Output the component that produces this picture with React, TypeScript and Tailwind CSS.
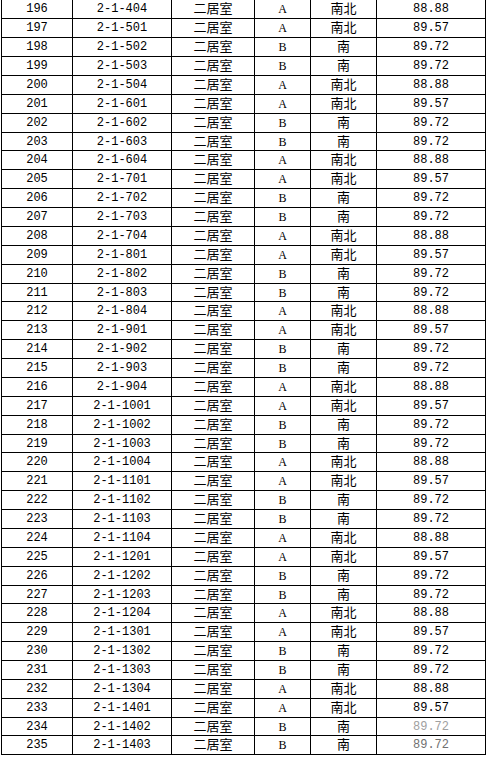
import React from "react";

type Row = { no: number; room: string; kind: string; dir: string; area: string };

const floors = [5, 6, 7, 8, 9, 10, 11, 12, 13, 14];

function buildRows(): Row[] {
  const rooms: string[] = ["2-1-404"];
  for (const f of floors) {
    for (let u = 1; u <= 4; u++) {
      rooms.push(`2-1-${f}0${u}`);
    }
  }
  const list = rooms.slice(0, 40);
  return list.map((room, i) => {
    const unit = room.slice(-1);
    let kind = "B";
    let dir = "南";
    let area = "89.72";
    if (unit === "4") {
      kind = "A";
      dir = "南北";
      area = "88.88";
    } else if (unit === "1") {
      kind = "A";
      dir = "南北";
      area = "89.57";
    }
    return { no: 196 + i, room, kind, dir, area };
  });
}

const rows = buildRows();
const shortRows = new Set([7, 15, 23, 31, 38]);

const mono = { fontFamily: '"Liberation Mono", "DejaVu Sans Mono", monospace' };
const serif = { fontFamily: '"Liberation Serif", "DejaVu Serif", serif' };

export default function App() {
  return (
    <div className="w-[490px] h-[758px] bg-white overflow-hidden">
      <div className="ml-[1px] w-[485px] flex flex-col text-black">
        {rows.map((r, i) => {
          const h = shortRows.has(i) ? "h-[18px]" : "h-[19px]";
          const areaColor =
            i === 38 ? "text-[#a0a0a0]" : i === 39 ? "text-[#707070]" : "text-black";
          return (
            <div
              key={r.no}
              className={`${h} flex border-l border-b border-black box-border`}
            >
              <div
                className="w-[71px] shrink-0 border-r border-black flex items-center justify-center text-[12px] leading-none"
                style={mono}
              >
                {r.no}
              </div>
              <div
                className="w-[99px] shrink-0 border-r border-black flex items-center justify-center text-[12px] leading-none"
                style={mono}
              >
                {r.room}
              </div>
              <div className="w-[83px] shrink-0 border-r border-black flex items-center justify-center text-[13px] leading-[13px] pb-[3px] font-['Noto_Sans_CJK_SC',sans-serif]">
                二居室
              </div>
              <div
                className="w-[56px] shrink-0 border-r border-black flex items-center justify-center text-[12px] leading-none"
                style={serif}
              >
                {r.kind}
              </div>
              <div className="w-[66px] shrink-0 border-r border-black flex items-center justify-center text-[13px] leading-[13px] pb-[3px] font-['Noto_Sans_CJK_SC',sans-serif]">
                {r.dir}
              </div>
              <div
                className={`w-[109px] shrink-0 border-r border-black flex items-center justify-center text-[12px] leading-none ${areaColor}`}
                style={mono}
              >
                {r.area}
              </div>
            </div>
          );
        })}
      </div>
    </div>
  );
}
